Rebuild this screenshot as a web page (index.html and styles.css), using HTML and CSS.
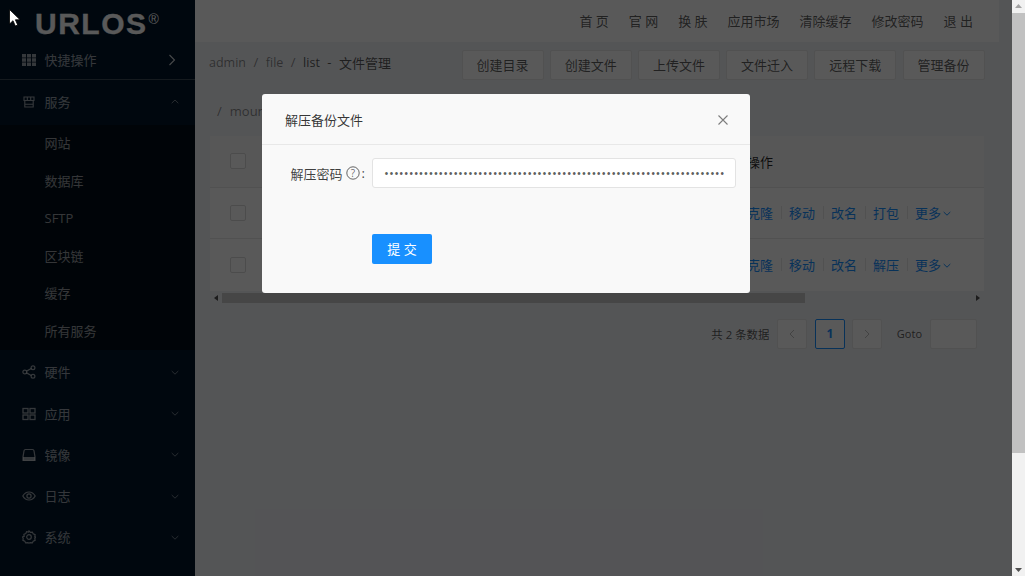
FILE: index.html
```html
<!DOCTYPE html>
<html lang="zh-CN">
<head>
<meta charset="utf-8">
<title>URLOS</title>
<link rel="stylesheet" href="styles.css">
</head>
<body>
<div class="app">
  <aside class="sidebar">
    <div class="logo"><span class="logo-text">URLOS</span><sup class="logo-mark">®</sup></div>
    <div class="quick">
      <svg class="ico" viewBox="0 0 14 14"><path fill="currentColor" d="M0 1h4v3.500H0zM5 1h4v3.500H5zM10 1h4v3.500h-4zM0 5.300h4v3.500H0zM5 5.300h4v3.500H5zM10 5.300h4v3.500h-4zM0 9.600h4v3.500H0zM5 9.600h4v3.500H5zM10 9.600h4v3.500h-4z"/></svg>
      <span class="label">快捷操作</span>
      <svg class="quick-arrow" viewBox="0 0 8 12"><path d="M1.500 1l5 5-5 5" fill="none" stroke="currentColor" stroke-width="1.100"/></svg>
    </div>
    <div class="item item-service">
      <svg class="ico" viewBox="0 0 14 14"><path d="M2 2h10v3.500H2zM2.800 5.500V12h8.400V5.500M5.300 2v3.500M8.700 2v3.500M2.800 9.200h8.400" fill="none" stroke="currentColor" stroke-width="1.100"/></svg>
      <span class="label">服务</span>
      <svg class="chev" viewBox="0 0 8 5"><path d="M.7 4.200L4 1l3.300 3.200" fill="none" stroke="currentColor"/></svg>
    </div>
    <div class="submenu">
      <div class="sub-item">网站</div>
      <div class="sub-item">数据库</div>
      <div class="sub-item">SFTP</div>
      <div class="sub-item">区块链</div>
      <div class="sub-item">缓存</div>
      <div class="sub-item">所有服务</div>
    </div>
    <div class="item item-first">
      <svg class="ico" viewBox="0 0 14 14"><g fill="none" stroke="currentColor" stroke-width="1.200"><circle cx="2.800" cy="7" r="1.900"/><circle cx="11" cy="2.700" r="1.900"/><circle cx="11" cy="11.300" r="1.900"/><path d="M4.500 6.100l4.800-2.600M4.500 7.900l4.800 2.600"/></g></svg>
      <span class="label">硬件</span>
      <svg class="chev" viewBox="0 0 8 5"><path d="M.7 1L4 4.200 7.300 1" fill="none" stroke="currentColor"/></svg>
    </div>
    <div class="item">
      <svg class="ico" viewBox="0 0 14 14"><g fill="none" stroke="currentColor" stroke-width="1.300"><rect x="1" y="1.500" width="5" height="4.500"/><rect x="8" y="1.500" width="5" height="4.500"/><rect x="1" y="8" width="5" height="4.500"/><rect x="8" y="8" width="5" height="4.500"/></g></svg>
      <span class="label">应用</span>
      <svg class="chev" viewBox="0 0 8 5"><path d="M.7 1L4 4.200 7.300 1" fill="none" stroke="currentColor"/></svg>
    </div>
    <div class="item">
      <svg class="ico" viewBox="0 0 14 14"><path d="M3.500 1.500h7a1.500 1.500 0 0 1 1.500 1.300l1 6v3.700H1V8.800l1-6a1.500 1.500 0 0 1 1.500-1.300z" fill="none" stroke="currentColor" stroke-width="1.200"/><path d="M1 9h12v3.500H1z" fill="currentColor"/></svg>
      <span class="label">镜像</span>
      <svg class="chev" viewBox="0 0 8 5"><path d="M.7 1L4 4.200 7.300 1" fill="none" stroke="currentColor"/></svg>
    </div>
    <div class="item">
      <svg class="ico" viewBox="0 0 14 14"><path d="M.8 7C2.400 4.200 4.500 3 7 3s4.600 1.200 6.200 4C11.600 9.800 9.500 11 7 11S2.400 9.800.8 7z" fill="none" stroke="currentColor" stroke-width="1.200"/><circle cx="7" cy="7" r="2.100" fill="none" stroke="currentColor" stroke-width="1.200"/></svg>
      <span class="label">日志</span>
      <svg class="chev" viewBox="0 0 8 5"><path d="M.7 1L4 4.200 7.300 1" fill="none" stroke="currentColor"/></svg>
    </div>
    <div class="item">
      <svg class="ico" viewBox="0 0 14 14"><path d="M7 .9l1.400 1.500 2-.3.800 1.800 1.900.8-.3 2L14 7l-1.200 1.300.3 2-1.900.8-.8 1.800-2-.3L7 13.100l-1.400-.5-2 .3-.8-1.800-1.900-.8.300-2L.5 7l1.700-.7-.3-2 1.900-.8.800-1.800 2 .3z" fill="none" stroke="currentColor" stroke-width="1.200"/><circle cx="7" cy="7" r="2.300" fill="none" stroke="currentColor" stroke-width="1.200"/></svg>
      <span class="label">系统</span>
      <svg class="chev" viewBox="0 0 8 5"><path d="M.7 1L4 4.200 7.300 1" fill="none" stroke="currentColor"/></svg>
    </div>
  </aside>

  <main class="main">
    <header class="topbar">
      <a class="nav">首 页</a>
      <a class="nav">官 网</a>
      <a class="nav">换 肤</a>
      <a class="nav">应用市场</a>
      <a class="nav">清除缓存</a>
      <a class="nav">修改密码</a>
      <a class="nav">退 出</a>
    </header>

    <div class="toolbar">
      <div class="crumbs">
        <span class="crumb">admin</span><span class="slash">/</span>
        <span class="crumb">file</span><span class="slash">/</span>
        <span class="crumb crumb-current">list</span><span class="dash">-</span>
        <span class="crumb-current">文件管理</span>
      </div>
      <div class="actions-bar">
        <button class="btn">创建目录</button>
        <button class="btn">创建文件</button>
        <button class="btn">上传文件</button>
        <button class="btn">文件迁入</button>
        <button class="btn">远程下载</button>
        <button class="btn">管理备份</button>
      </div>
    </div>

    <div class="path"><span class="slash-path">/</span>mount</div>

    <div class="table">
      <div class="row row-head">
        <span class="check"></span>
        <div class="cell-actions">操作</div>
      </div>
      <div class="row">
        <span class="check"></span>
        <div class="cell-actions">
          <a class="link">克隆</a><i class="sep"></i><a class="link">移动</a><i class="sep"></i><a class="link">改名</a><i class="sep"></i><a class="link">打包</a><i class="sep"></i><a class="link">更多</a>
          <svg class="more" viewBox="0 0 8 5"><path d="M.7 1L4 4.200 7.300 1" fill="none" stroke="currentColor"/></svg>
        </div>
      </div>
      <div class="row">
        <span class="check"></span>
        <div class="cell-actions">
          <a class="link">克隆</a><i class="sep"></i><a class="link">移动</a><i class="sep"></i><a class="link">改名</a><i class="sep"></i><a class="link">解压</a><i class="sep"></i><a class="link">更多</a>
          <svg class="more" viewBox="0 0 8 5"><path d="M.7 1L4 4.200 7.300 1" fill="none" stroke="currentColor"/></svg>
        </div>
      </div>
    </div>

    <div class="hscroll">
      <svg class="harrow" viewBox="0 0 4 6"><path d="M4 0v6L0 3z" fill="currentColor"/></svg>
      <div class="hthumb"></div>
      <svg class="harrow harrow-right" viewBox="0 0 4 6"><path d="M0 0v6l4-3z" fill="currentColor"/></svg>
    </div>

    <div class="pager">
      <span class="total">共 2 条数据</span>
      <span class="page-box"><svg class="page-ico" viewBox="0 0 6 10"><path d="M5 1L1 5l4 4" fill="none" stroke="currentColor"/></svg></span>
      <span class="page-box page-current">1</span>
      <span class="page-box"><svg class="page-ico" viewBox="0 0 6 10"><path d="M1 1l4 4-4 4" fill="none" stroke="currentColor"/></svg></span>
      <span class="goto">Goto</span>
      <span class="goto-input"></span>
    </div>
  </main>

  <div class="vscroll">
    <svg class="varrow" viewBox="0 0 7 4"><path d="M0 4h7L3.500 0z" fill="currentColor"/></svg>
    <div class="vthumb"></div>
    <svg class="varrow varrow-down" viewBox="0 0 7 4"><path d="M0 0h7L3.500 4z" fill="currentColor"/></svg>
  </div>

  <div class="overlay"></div>

  <section class="modal">
    <div class="modal-head">
      <span>解压备份文件</span>
      <svg class="close" viewBox="0 0 10 10"><path d="M.5.500l9 9M9.500.500l-9 9" fill="none" stroke="currentColor" stroke-width="1.100"/></svg>
    </div>
    <div class="modal-body">
      <div class="form-row">
        <label class="form-label">解压密码
          <svg class="help" viewBox="0 0 14 14"><circle cx="7" cy="7" r="6.200" fill="none" stroke="currentColor"/><text x="7" y="10.500" class="help-q">?</text></svg>
          <span class="colon">:</span>
        </label>
        <input class="password" type="password" value="aaaaaaaaaaaaaaaaaaaaaaaaaaaaaaaaaaaaaaaaaaaaaaaaaaaaaaaaaaaaaaaaaaaaa">
      </div>
      <button class="submit">提 交</button>
    </div>
  </section>

  <svg class="cursor" viewBox="0 0 12 18"><path d="M.5.500v14.500l3.500-3.300 2.300 5.300 2.400-1-2.300-5.200h4.700z" fill="#fff" stroke="#000" stroke-width=".8"/></svg>
</div>
</body>
</html>
```

FILE: styles.css
```css
* { box-sizing: border-box; }
html, body { margin: 0; height: 100%; overflow: hidden; }
body {
  font-family: "Open Sans", "Noto Sans CJK SC", sans-serif;
  font-size: 13px;
  color: rgba(0, 0, 0, .65);
}
.app { position: relative; display: flex; width: 1025px; height: 576px; overflow: hidden; background: #f0f2f5; }

/* sidebar */
.sidebar { flex: 0 0 195px; height: 576px; background: #001529; color: rgba(255, 255, 255, .6); }
.logo { height: 42px; padding: 6px 0 0 35px; color: #fff; display: flex; align-items: flex-start; }
.logo-text { font: bold 30px/36px "Liberation Sans", sans-serif; letter-spacing: 1.500px; -webkit-text-stroke: .3px #fff; }
.logo-mark { font: 14px/14px "Liberation Sans", sans-serif; margin: 6px 0 0 1px; }
.quick { display: flex; align-items: center; height: 38px; padding-left: 22px; border-bottom: 1px solid #3d4a58; }
.quick .ico, .quick .label { margin-bottom: 1px; }
.item { display: flex; align-items: center; height: 41.250px; padding-left: 22px; }
.item-service { margin-top: 1px; }
.item-first { margin-top: 1.500px; }
.ico { width: 14px; height: 14px; flex: none; }
.label { margin-left: 8.500px; flex: 1; line-height: 20px; }
.quick-arrow { width: 8px; height: 12px; margin: 0 19px 2px 0; color: rgba(255, 255, 255, .8); }
.chev { width: 8px; height: 5px; margin-right: 16px; color: rgba(255, 255, 255, .45); }
.submenu { background: #000c17; margin-top: 3px; }
.sub-item { height: 37.500px; line-height: 37.500px; padding-left: 44.500px; }

/* main */
.main { flex: 0 0 817px; height: 576px; }
.topbar { display: flex; justify-content: flex-end; align-items: center; gap: 20px; width: 804px; height: 42px; padding-right: 26px; background: #fff; }
.nav { line-height: 20px; color: rgba(0, 0, 0, .65); }
.toolbar { display: flex; justify-content: space-between; padding: 8px 27.500px 0 14px; }
.crumbs { display: flex; align-items: center; height: 24px; color: rgba(0, 0, 0, .45); white-space: pre; }
.crumb { font-size: 12.500px; }
.slash { margin: 0 7.500px; }
.dash { margin: 0 7.500px; color: rgba(0, 0, 0, .65); }
.crumb-current { color: rgba(0, 0, 0, .65); }
.actions-bar { display: flex; gap: 6.200px; }
.btn { width: 82px; height: 30px; padding: 0 0 2px; background: #fff; border: 1px solid #e8e8e8; border-radius: 2px; font: inherit; color: rgba(0, 0, 0, .65); }
.path { height: 26px; margin-top: 18px; padding-left: 22px; line-height: 26px; color: rgba(0, 0, 0, .45); white-space: pre; }
.slash-path { margin-right: 8px; }
.table { margin: 12px 28px 0 15px; background: #fff; }
.row { display: flex; align-items: center; height: 51.500px; padding-left: 20px; border-bottom: 1px solid #e8e8e8; }
.row:last-child { border-bottom: 0; }
.row-head { background: #fafafa; color: rgba(0, 0, 0, .85); }
.check { width: 16px; height: 16px; background: #fff; border: 1px solid #d9d9d9; border-radius: 2px; }
.cell-actions { display: flex; align-items: center; margin-left: auto; width: 237px; }
.link { color: #1890ff; }
.sep { width: 1px; height: 13px; margin: 0 7.500px; background: #e8e8e8; }
.more { width: 8px; height: 5px; margin: 2px 0 0 2px; color: #1890ff; }
.hscroll { display: flex; align-items: center; height: 10px; margin: 2px 28px 0 15px; color: #505050; }
.harrow { width: 4px; height: 6px; margin-left: 4px; flex: none; }
.hthumb { width: 583px; height: 10px; margin-left: 4px; background: #c8c8c8; }
.harrow-right { margin-left: auto; margin-right: 4px; }
.pager { display: flex; align-items: center; height: 30px; margin: 16px 35px 0 0; justify-content: flex-end; }
.total { margin-right: 8px; font-size: 11.400px; }
.page-box { display: flex; align-items: center; justify-content: center; width: 30px; height: 30px; margin-right: 7.500px; background: #fff; border: 1px solid #e8e8e8; border-radius: 2px; color: rgba(0, 0, 0, .25); }
.page-ico { width: 6px; height: 10px; }
.page-current { border-color: #1890ff; color: #1890ff; font-weight: 700; font-size: 12px; }
.goto { margin: 0 8px 0 7px; font-size: 11px; }
.goto-input { width: 47px; height: 30px; background: #fff; border: 1px solid #e8e8e8; border-radius: 2px; }

/* page scrollbar */
.vscroll { flex: 0 0 13px; display: flex; flex-direction: column; align-items: center; background: #f1f1f1; color: #505050; }
.varrow { width: 7px; height: 4px; margin: 4px 0 5px; flex: none; color: #a3a3a3; }
.varrow-down { margin: auto 0 4px; color: #505050; }
.vthumb { flex: none; height: 440px; width: 13px; background: #c1c1c1; }

/* overlay */
.overlay { position: absolute; left: 0; top: 0; width: 1011.500px; height: 576px; background: rgba(0, 0, 0, .65); }
.modal { position: absolute; left: 262px; top: 94px; width: 488px; height: 199px; background: #f9f9f9; border-radius: 3px; }
.modal-head { display: flex; justify-content: space-between; align-items: center; height: 51px; padding: 0 22px 0 23px; border-bottom: 1px solid #e8e8e8; color: rgba(0, 0, 0, .8); }
.close { width: 10px; height: 10px; margin-top: 1px; color: rgba(0, 0, 0, .5); }
.modal-body { padding: 13px 14px 0 0; }
.form-row { display: flex; align-items: center; }
.form-label { display: flex; align-items: center; justify-content: flex-end; width: 110px; color: rgba(0, 0, 0, .75); }
.help { width: 14px; height: 14px; margin-left: 3px; color: rgba(0, 0, 0, .6); }
.help-q { font: 10px "Open Sans", sans-serif; text-anchor: middle; fill: currentColor; }
.colon { margin: 0 7px 0 2px; }
.password { flex: 1; height: 30px; padding: 0 11px; border: 1px solid #e3e3e3; border-radius: 3px; background: #fff; font: 13px "Open Sans", sans-serif; letter-spacing: .05px; color: rgba(0, 0, 0, .65); outline: none; }
.submit { display: block; width: 60px; height: 30px; margin: 46px 0 0 110px; padding: 0 0 2px; background: #1890ff; border: 0; border-radius: 2px; color: #fff; font: inherit; }
.cursor { position: absolute; left: 9px; top: 9px; width: 12px; height: 18px; }
```
